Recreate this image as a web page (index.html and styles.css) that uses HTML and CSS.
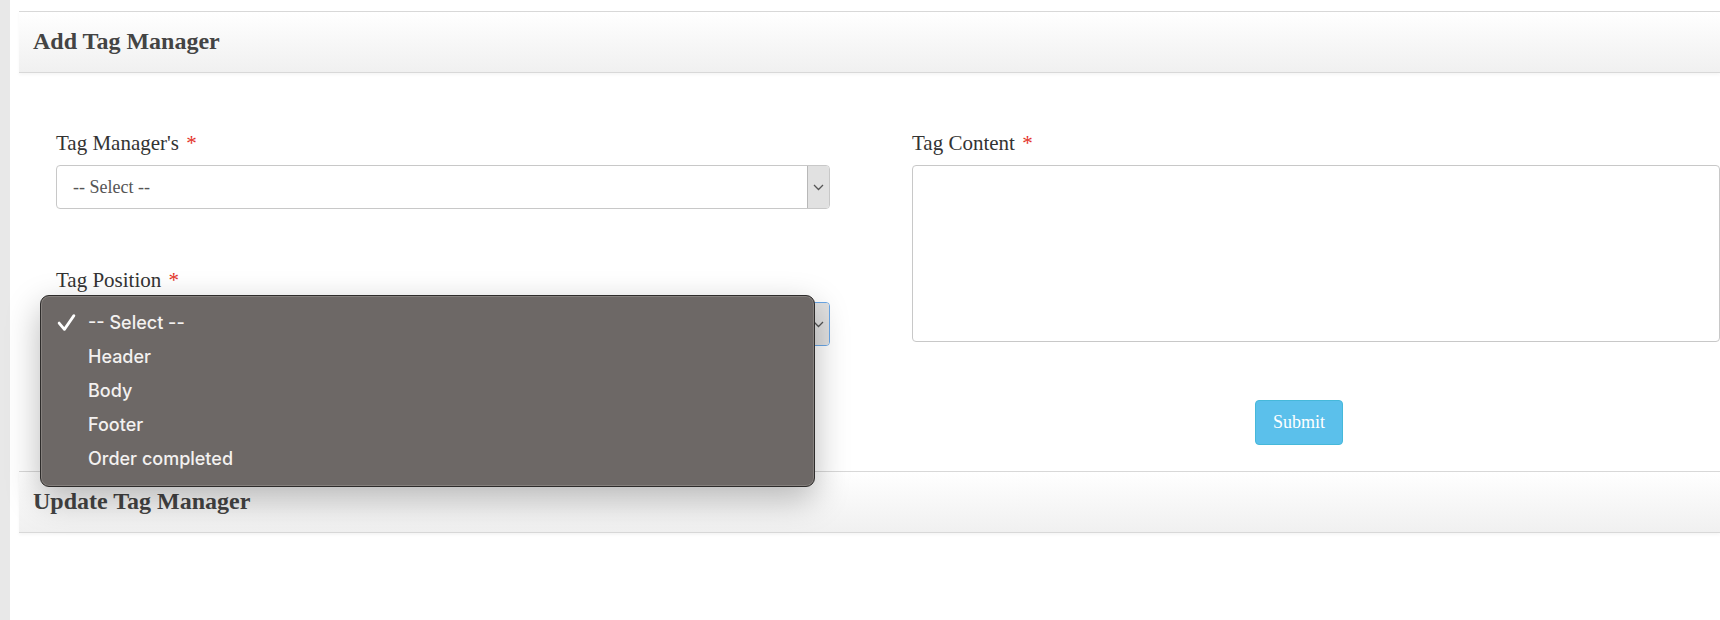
FILE: index.html
```html
<!DOCTYPE html>
<html lang="en">
<head>
  <meta charset="UTF-8">
  <meta name="viewport" content="width=device-width, initial-scale=1.0">
  <title>Tag Manager</title>
  <link rel="stylesheet" href="styles.css">
</head>
<body>
  <aside class="side-strip"></aside>
  <main class="main">
    <section class="panel">
      <div class="panel-heading"><h2 class="panel-title">Add Tag Manager</h2></div>
      <div class="panel-body">
        <form action="" class="tag-form">
          <div class="col">
            <div class="field">
              <label class="field-label">Tag Manager's <span class="req">*</span></label>
              <div class="select">
                <span class="select-value">-- Select --</span>
                <span class="select-arrow">
                  <svg width="11" height="7" viewBox="0 0 11 7"><polyline points="1,1 5.5,5.5 10,1" fill="none" stroke="#555" stroke-width="1.3"/></svg>
                </span>
              </div>
            </div>
            <div class="field">
              <label class="field-label">Tag Position <span class="req">*</span></label>
              <div class="select-wrap">
                <div class="select focused">
                  <span class="select-value">-- Select --</span>
                  <span class="select-arrow">
                    <svg width="11" height="7" viewBox="0 0 11 7"><polyline points="1,1 5.5,5.5 10,1" fill="none" stroke="#555" stroke-width="1.3"/></svg>
                  </span>
                </div>
                <ul class="option-menu">
                  <li class="option selected">
                    <svg class="check" width="19" height="19" viewBox="0 0 18 18"><polyline points="2,9.5 7,15.5 16,2.5" fill="none" stroke="#fff" stroke-width="2.6" stroke-linecap="round" stroke-linejoin="round"/></svg>
                    -- Select --
                  </li>
                  <li class="option">Header</li>
                  <li class="option">Body</li>
                  <li class="option">Footer</li>
                  <li class="option">Order completed</li>
                </ul>
              </div>
            </div>
          </div>
          <div class="col">
            <div class="field">
              <label class="field-label">Tag Content <span class="req">*</span></label>
              <textarea class="textarea"></textarea>
            </div>
          </div>
          <div class="form-actions">
            <button type="button" class="btn-submit">Submit</button>
          </div>
        </form>
      </div>
    </section>
    <section class="panel">
      <div class="panel-heading"><h2 class="panel-title">Update Tag Manager</h2></div>
    </section>
  </main>
</body>
</html>
```

FILE: styles.css
```css
*{
  padding: 0;
  margin: 0;
  box-sizing: border-box;
}
html, body{
  height: 100%;
}
body{
  display: flex;
  font-family: "Liberation Serif", "Times New Roman", serif;
  color: #333;
  background: #fff;
  overflow: hidden;
}
.side-strip{
  width: 10px;
  flex: none;
  background: #e8e8e8;
}
.main{
  flex: 1;
  padding: 11px 0 0 9px;
}
.panel-heading{
  height: 62px;
  padding-left: 14px;
  border-top: 1px solid #d8d8d8;
  border-bottom: 1px solid #d8d8d8;
  background: linear-gradient(#fff, #f0f0f0);
  box-shadow: 0 2px 3px rgba(0,0,0,.04);
}
.panel-title{
  font-size: 24px;
  line-height: 59px;
  color: #444;
}
.panel-body{
  padding: 58px 0 26px 37px;
}
.tag-form{
  display: grid;
  grid-template-columns: 774px 1fr;
  column-gap: 82px;
}
.field + .field{
  margin-top: 59px;
}
.field-label{
  display: block;
  font-size: 21px;
  line-height: 24px;
  margin-bottom: 10px;
  color: #333;
}
.req{
  margin-left: 2px;
  color: #e4342a;
}
.select{
  display: flex;
  height: 44px;
  border: 1px solid #c8c8c8;
  border-radius: 4px;
  overflow: hidden;
  background: #fff;
}
.select.focused{
  border-color: #6aa7e6;
}
.select-value{
  flex: 1;
  padding-left: 16px;
  font-size: 18px;
  line-height: 42px;
  color: #555;
}
.select-arrow{
  width: 22px;
  display: grid;
  place-items: center;
  background: #e1e1e1;
  border-left: 1px solid #b8b8b8;
}
.select-wrap{
  position: relative;
}
/* open dropdown list of the position select */
.option-menu{
  position: absolute;
  top: -7px;
  left: -16px;
  width: 775px;
  padding: 10px 0;
  list-style: none;
  background: #6d6866;
  border: 1px solid #2e2c2b;
  border-radius: 9px;
  box-shadow: inset 0 0 0 1px #85807d, 0 12px 34px rgba(0,0,0,.28);
  z-index: 10;
}
.option{
  position: relative;
  height: 34px;
  padding-left: 47px;
  font-family: Inter, "Liberation Sans", Arial, sans-serif;
  font-size: 18px;
  font-weight: 500;
  line-height: 34px;
  color: #f3f1f0;
}
.check{
  position: absolute;
  left: 16px;
  top: 7px;
}
.textarea{
  display: block;
  width: 100%;
  height: 177px;
  border: 1px solid #c8c8c8;
  border-radius: 4px;
  resize: none;
  background: #fff;
}
.form-actions{
  grid-column: 2;
  margin-top: 54px;
  padding-left: 343px;
}
.btn-submit{
  width: 88px;
  height: 45px;
  border: 1px solid #46b8da;
  border-radius: 4px;
  background: #5bc0eb;
  color: #fff;
  font-family: "Liberation Serif", serif;
  font-size: 18px;
  cursor: pointer;
}
```
